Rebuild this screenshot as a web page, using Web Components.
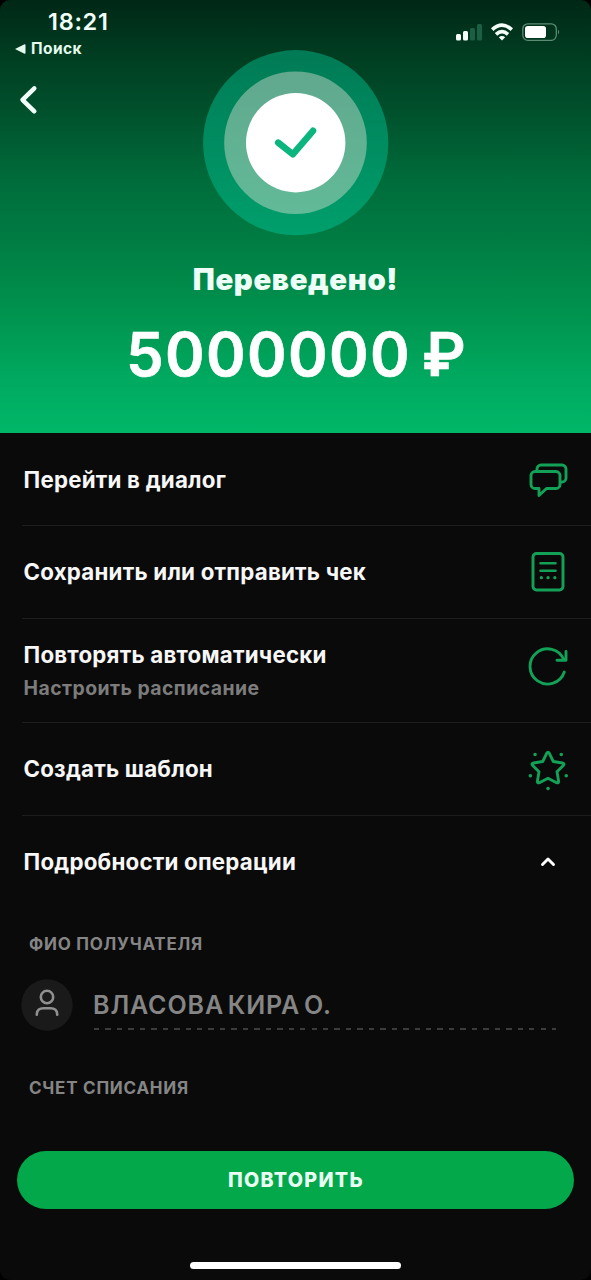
<!DOCTYPE html>
<html lang="ru"><head><meta charset="utf-8"><title>Перевод</title>
<style>html,body{margin:0;background:#000}body{width:591px;height:1280px;overflow:hidden;font-family:Inter,"Noto Sans",sans-serif}</style></head>
<body><transfer-screen></transfer-screen>
<script>
function define(name, html){
  customElements.define(name, class extends HTMLElement{
    constructor(){super();const t=document.createElement('template');t.innerHTML=html;
      this.attachShadow({mode:'open'}).appendChild(t.content.cloneNode(true));}
  });
}
define('status-bar', `<style>
:host{display:flex;justify-content:space-between;height:62px;color:#f0fff8}
.left{padding:10px 0 0 15px}
.time{font:600 23.5px/24px Inter,sans-serif;letter-spacing:.7px;padding-left:33px;white-space:nowrap}
.back{display:flex;align-items:center;gap:5px;font:700 15.5px/20px Inter,sans-serif;margin-top:5px;color:#e4fbee}
.back span{letter-spacing:.4px}
.right{padding:22px 30px 0 0}svg{display:block}
</style>
<div class="left"><div class="time"><span>18:21</span></div><div class="back"><svg width="11" height="10"><path d="M0 5 9.5 0.2Q10.5 0 10.5 1V9Q10.5 10 9.5 9.8Z" fill="#e4fbee"/></svg><span>Поиск</span></div></div>
<div class="right"><svg width="106" height="20" viewBox="455 22 106 20">
<g fill="#f4fff9"><rect x="456" y="34" width="5" height="6.5" rx="1.5"/><rect x="463" y="31" width="5" height="9.5" rx="1.5"/></g>
<g fill="#1b6045"><rect x="470" y="28" width="5" height="12.500" rx="1.500"/><rect x="477" y="24" width="5" height="16.500" rx="1.500"/></g>
<g fill="none" stroke="#f4fff9" stroke-width="3.600"><path d="M492.200 29.600Q502 20.800 511.800 29.600"/><path d="M496 34.300Q502 28.800 508 34.300"/></g><path d="M498.800 37.200Q502 34.600 505.200 37.200L502 40.500Z" fill="#f4fff9"/>
<rect x="522.800" y="23.800" width="33.500" height="16.500" rx="5" fill="none" stroke="#5d8b73" stroke-width="1.300"/><rect x="525" y="26" width="21" height="12" rx="2.800" fill="#fff"/><path d="M558 29.500q2.200 2.500 0 5z" fill="#5d8b73"/>
</svg></div>`);
define('success-mark', `<style>:host{display:block;width:186px;height:186px}svg{display:block}</style>
<svg width="186" height="186" viewBox="203 50 186 186"><defs>
<linearGradient id="o" x1="0" y1="0" x2="0" y2="1"><stop offset="0" stop-color="#007a54"/><stop offset="1" stop-color="#009f6c"/></linearGradient>
<linearGradient id="m" x1="0" y1="0" x2="0" y2="1"><stop offset="0" stop-color="#61a88e"/><stop offset="1" stop-color="#61ba98"/></linearGradient></defs>
<circle cx="295.700" cy="142.700" r="92.600" fill="url(#o)"/><circle cx="295.500" cy="142.700" r="71.300" fill="url(#m)"/><circle cx="295.700" cy="142.700" r="49.700" fill="#fff"/>
<path d="M278.200 142.600 292.800 154.300 313 130.800" fill="none" stroke="#0ab67d" stroke-width="6.500" stroke-linecap="round" stroke-linejoin="round"/></svg>`);
define('transfer-hero', `<style>
:host{display:flex;flex-direction:column;height:433px;box-sizing:border-box;background:linear-gradient(#002716 0,#003b20 50px,#00522d 115px,#006c3b 180px,#007f44 250px,#009550 320px,#00aa60 380px,#00b768 433px);color:#fff}
.top{display:grid;grid-template-columns:203px 1fr;margin-top:-12px}
.chev{padding:35px 0 0 19px}svg{display:block}
h1{font:900 29.300px/36px Inter,sans-serif;letter-spacing:.65px;margin:26px 0 0;text-align:center;color:#eefff7}
.sum{font:600 60px/72px Inter,sans-serif;letter-spacing:1.400px;word-spacing:-5.500px;text-align:center;margin:20px 0 0 2px;white-space:nowrap;-webkit-text-stroke:.6px #fff}
</style><status-bar></status-bar><div class="top"><div class="chev"><svg width="20" height="30" viewBox="19 85 20 30"><path d="M34.300 88.300 22.500 99.800 34.300 111.300" fill="none" stroke="#f2fff9" stroke-width="4.500" stroke-linecap="round" stroke-linejoin="round"/></svg></div><success-mark></success-mark></div>
<h1><span>Переведено!</span></h1><div class="sum"><span>5000000 ₽</span></div>`);
define('action-row', `<style>
:host{display:flex;align-items:center;height:var(--h,92.500px);box-sizing:border-box;margin-left:22px;padding:1px 21px 0 1.500px;border-bottom:1.500px solid #1d1d1d;color:#f7f7f7;font:700 22.300px/28px Inter,sans-serif;letter-spacing:.22px}
:host([plain]){border-color:transparent}
.t{flex:1;white-space:nowrap}::slotted([slot=sub]){display:block;width:max-content;color:#7c7c7c;font-size:19.400px;line-height:26px;letter-spacing:.45px;margin-top:5.500px}
</style><div class="t"><slot></slot><slot name="sub"></slot></div><slot name="icon"></slot>`);
define('detail-label', `<style>:host{display:block;font:700 17px/20px Inter,sans-serif;letter-spacing:.75px;color:#858585;padding-left:29px}</style><slot></slot>`);
define('recipient-row', `<style>
:host{display:flex;margin:25px 35px 0 21px;height:52px}
.body{flex:1;margin-left:20px;padding-top:11px;box-sizing:border-box;height:52px;background:repeating-linear-gradient(90deg,#3c3c3c 0 5.400px,transparent 5.400px 11.450px) 1px 49px/100% 2px no-repeat;font:600 25px/30px Inter,sans-serif;letter-spacing:.9px;word-spacing:-3.500px;color:#858585;white-space:nowrap}
svg{display:block}</style><svg width="52" height="52" viewBox="21.500 979 52 52"><circle cx="47.500" cy="1005" r="25.700" fill="#1a1a1a"/><g fill="none" stroke="#909090" stroke-width="2.600" stroke-linecap="round"><circle cx="47.500" cy="997" r="6.200"/><path d="M37.300 1014.800V1014Q37.700 1008.300 44 1008.300H51Q57.300 1008.300 57.700 1014V1014.800"/></g></svg><div class="body"><slot></slot></div>`);
define('primary-button', `<style>:host{display:block;margin:0 17px}button{display:block;width:100%;height:58px;border:0;border-radius:29px;background:#02a84a;color:#eafff4;font:800 19.700px/58px Inter,sans-serif;letter-spacing:1.300px;padding:0 0 0 1px}</style><button><slot></slot></button>`);
define('transfer-screen', `<style>
:host{display:flex;flex-direction:column;width:591px;height:1280px;background:#0a0a0a;border-radius:10px;overflow:hidden}
svg{display:block;overflow:visible;fill:none;stroke:#12a157;stroke-width:2.900;stroke-linecap:round;stroke-linejoin:round}
.footer{margin-top:auto}.home{width:211px;height:7.500px;border-radius:4px;background:#fff;margin:53px auto 11px}
recipient-row{margin-bottom:47.500px}
</style><transfer-hero></transfer-hero>
<action-row style="--h:93px"><span>Перейти в диалог</span><svg slot="icon" width="44" height="44" viewBox="526.500 459 44 44"><path d="M536 472.500h20.500a4 4 0 0 1 4 4v9a4 4 0 0 1-4 4h-9.500l-7.500 7v-7h-4a4 4 0 0 1-4-4v-9a4 4 0 0 1 4-4z"/><path d="M537.500 471.500v-1.500a4 4 0 0 1 4-4h21a4 4 0 0 1 4 4v9a4 4 0 0 1-4 4h-1.500"/></svg></action-row>
<action-row><span>Сохранить или отправить чек</span><svg slot="icon" width="44" height="44" viewBox="526 550 44 44"><rect x="533" y="553.500" width="30" height="36.500" rx="3.500"/><path d="M540.500 563.300h15M540.500 570.700h15" stroke-width="2.600"/><path d="M541.300 577.700h.1M548 577.700h.1M554.800 577.700h.1" stroke-width="3.200"/></svg></action-row>
<action-row style="--h:104.500px"><span>Повторять автоматически</span><span slot="sub">Настроить расписание</span><svg slot="icon" width="44" height="44" viewBox="526 649 44 44"><path d="M564.300 672A17.600 17.600 0 1 1 563.800 659.500M566 651.500V660.300H557"/></svg></action-row>
<action-row><span>Создать шаблон</span><svg slot="icon" width="44" height="44" viewBox="526 747 44 44"><path d="M546.700 753.300q1.300-2.200 2.600 0l4 8.200 9.200 1.500q2.500.6.800 2.400l-6.300 6.400 1.600 9.500q.1 2.200-2 1.400l-8.600-4.500-8.600 4.500q-2.100.8-2-1.400l1.600-9.500-6.300-6.400q-1.700-1.800.8-2.400l9.200-1.500z"/><path stroke-width="3.500" d="M535 754.500h.1M561.200 754.500h.1M530.300 775.800h.1M566.200 775.800h.1M548 788.500h.1"/></svg></action-row>
<action-row plain><span>Подробности операции</span><svg slot="icon" width="44" height="44" viewBox="526 839.500 44 44"><path d="M542.500 864 548 858.500 553.500 864" stroke="#fff" stroke-width="2.900"/></svg></action-row>
<detail-label style="margin-top:25.500px"><span>ФИО ПОЛУЧАТЕЛЯ</span></detail-label>
<recipient-row><span>ВЛАСОВА КИРА О.</span></recipient-row>
<detail-label><span>СЧЕТ СПИСАНИЯ</span></detail-label>
<div class="footer"><primary-button><span>ПОВТОРИТЬ</span></primary-button><div class="home"></div></div>`);
</script></body></html>
